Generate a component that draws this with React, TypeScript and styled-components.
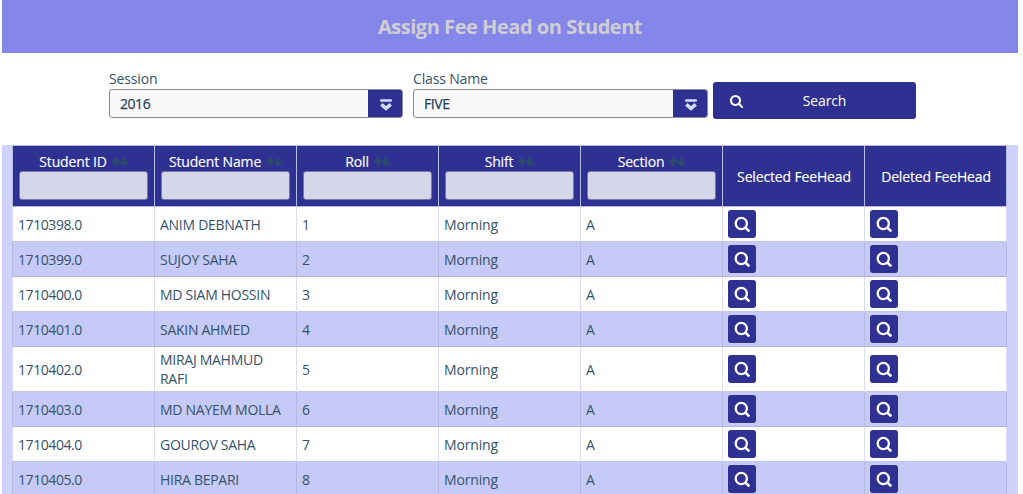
import React from 'react';
import styled, { createGlobalStyle } from 'styled-components';

const navy = '#2e3092';

const GlobalStyle = createGlobalStyle`
  * { box-sizing: border-box; }
  body {
    margin: 0;
    height: 494px;
    overflow: hidden;
    background: #fff;
    color: #34526b;
    font: 14px/19px "Open Sans", sans-serif;
  }
`;

const Page = styled.main`
  width: 1016px;
  height: 494px;
  margin-left: 2px;
  overflow: hidden;
`;

const Banner = styled.header`
  display: flex;
  align-items: center;
  justify-content: center;
  height: 53px;
  background: #8586e9;
`;

const Title = styled.h1`
  margin: 0;
  color: #cfcfd3;
  font-size: 20px;
  line-height: 27px;
  font-weight: 700;
  letter-spacing: -0.46px;
`;

const Filters = styled.section`
  display: flex;
  align-items: flex-start;
  height: 92px;
  padding: 16px 0 0 107px;
`;

const Field = styled.div<{ $width: number }>`
  width: ${(p) => p.$width}px;
  margin-right: 10px;
`;

const Label = styled.div`
  height: 20px;
  letter-spacing: -0.15px;
`;

const Select = styled.div`
  display: flex;
  height: 29px;
  border: 1px solid #8b8b95;
  border-radius: 3px;
  background: #f8f8f8;
  overflow: hidden;
`;

const SelectValue = styled.div`
  flex: 1;
  padding: 4px 10px;
  color: #25435c;
  letter-spacing: -0.45px;
  -webkit-text-stroke: 0.25px #25435c;
`;

const Trigger = styled.div`
  display: flex;
  align-items: center;
  justify-content: center;
  width: 34px;
  padding: 2px 0 0 2px;
  background: ${navy};
`;

const SearchButton = styled.button`
  display: flex;
  align-items: center;
  width: 203px;
  height: 37px;
  margin: 13px 0 0 -5px;
  padding: 0 0 0 17px;
  border: 0;
  border-radius: 3px;
  background: ${navy};
  color: #fff;
  font: inherit;
`;

const ButtonText = styled.span`
  flex: 1;
  padding-right: 10px;
  text-align: center;
  letter-spacing: -0.15px;
`;

const TablePanel = styled.section`
  padding: 0 11px 0 10px;
  background: #cfd2fd;
`;

const Row = styled.div<{ $striped?: boolean }>`
  display: grid;
  grid-template-columns: repeat(6, 142px) 143px;
  min-height: 35px;
  background: ${(p) => (p.$striped ? '#c6caf6' : '#fff')};
  --rule: ${(p) => (p.$striped ? '#b5b9e2' : '#d9ddf2')};
  --base: ${(p) => (p.$striped ? '#b0b4dd' : '#c0c4ea')};
`;

const HeadRow = styled(Row)`
  height: 62px;
  background: ${navy};
  color: #fff;
`;

const HeadCell = styled.div<{ $plain?: boolean }>`
  display: flex;
  flex-direction: column;
  align-items: ${(p) => (p.$plain ? 'center' : 'stretch')};
  justify-content: ${(p) => (p.$plain ? 'center' : 'flex-start')};
  padding: ${(p) => (p.$plain ? '0 0 0 1px' : '6px 6px 0')};
  border: solid #b7bbdf;
  border-width: 1px 0 1px 1px;
  &:last-child { border-right-width: 1px; }
`;

const HeadLabel = styled.div`
  display: flex;
  align-items: center;
  justify-content: center;
  gap: 5px;
  height: 19px;
  letter-spacing: -0.15px;
  -webkit-text-stroke: 0.15px #fff;
`;

const FilterInput = styled.input`
  width: 129px;
  height: 29px;
  border: 1px solid #77779f;
  border-radius: 3px;
  background: #d5d6e9;
`;

const Cell = styled.div<{ $tracking?: number }>`
  display: flex;
  align-items: center;
  padding: 3px 5px;
  border-left: 1px solid var(--rule);
  border-bottom: 1px solid var(--base);
  letter-spacing: ${(p) => p.$tracking ?? -0.15}px;
  &:last-child { border-right: 1px solid var(--rule); }
`;

const IconButton = styled.button`
  display: flex;
  align-items: center;
  justify-content: center;
  width: 28px;
  height: 28px;
  padding: 0;
  border: 0;
  border-radius: 3px;
  background: ${navy};
`;

const SearchIcon = () => (
  <svg width="13" height="14" viewBox="0 0 1664 1792" fill="#fff">
    <path d="M1152 832q0-185-131.5-316.5T704 384 387.5 515.5 256 832t131.5 316.5T704 1280t316.5-131.5T1152 832zm512 832q0 52-38 90t-90 38q-54 0-90-38l-343-342q-179 124-399 124-143 0-273.5-55.5t-225-150-150-225T0 832t55.5-273.5 150-225 225-150T704 128t273.5 55.5 225 150 150 225T1408 832q0 220-124 399l343 343q37 37 37 90z" />
  </svg>
);

const LensIcon = () => (
  <svg width="16" height="16" viewBox="0 0 16 16" fill="none" stroke="#fff" strokeWidth="2.3">
    <circle cx="7.3" cy="7.5" r="5.6" />
    <path d="M10.8 11 15.4 15.4" strokeWidth="2.6" />
  </svg>
);

const ChevronIcon = () => (
  <svg width="12" height="12" viewBox="0 0 12 12" fill="none" stroke="#d3dcff">
    <path d="M1.2 1.5h9.6" strokeWidth="2.4" strokeLinecap="round" />
    <path d="m1.3 5.4 4.7 4 4.7-4" strokeWidth="3.6" />
  </svg>
);

const SortIcon = () => (
  <svg width="16" height="10" viewBox="0 0 16 10" fill="none" stroke="#2b4a6c" strokeWidth="2.8">
    <path d="M4 9V2M.8 5.4 4 2.2l3.2 3.2M12 1v7M8.8 4.6 12 7.8l3.2-3.2" />
  </svg>
);

const columns = ['Student ID', 'Student Name', 'Roll', 'Shift', 'Section'];
const students = [
  ['1710398.0', 'ANIM DEBNATH'],
  ['1710399.0', 'SUJOY SAHA'],
  ['1710400.0', 'MD SIAM HOSSIN'],
  ['1710401.0', 'SAKIN AHMED'],
  ['1710402.0', 'MIRAJ MAHMUD RAFI'],
  ['1710403.0', 'MD NAYEM MOLLA'],
  ['1710404.0', 'GOUROV SAHA'],
  ['1710405.0', 'HIRA BEPARI'],
];

const Dropdown = ({ label, value, width }: { label: string; value: string; width: number }) => (
  <Field $width={width}>
    <Label>{label}</Label>
    <Select>
      <SelectValue>{value}</SelectValue>
      <Trigger><ChevronIcon /></Trigger>
    </Select>
  </Field>
);

export default function App() {
  return (
    <>
      <GlobalStyle />
      <Page>
        <Banner><Title>Assign Fee Head on Student</Title></Banner>
        <Filters>
          <Dropdown label="Session" value="2016" width={294} />
          <Dropdown label="Class Name" value="FIVE" width={295} />
          <SearchButton><SearchIcon /><ButtonText>Search</ButtonText></SearchButton>
        </Filters>
        <TablePanel>
          <HeadRow>
            {columns.map((name) => (
              <HeadCell key={name}>
                <HeadLabel>{name}<SortIcon /></HeadLabel>
                <FilterInput aria-label={name} />
              </HeadCell>
            ))}
            <HeadCell $plain><HeadLabel>Selected FeeHead</HeadLabel></HeadCell>
            <HeadCell $plain><HeadLabel>Deleted FeeHead</HeadLabel></HeadCell>
          </HeadRow>
          {students.map(([id, name], i) => (
            <Row key={id} $striped={i % 2 === 1}>
              <Cell $tracking={-0.42}>{id}</Cell>
              <Cell $tracking={-0.28}>{name}</Cell>
              <Cell>{i + 1}</Cell>
              <Cell>Morning</Cell>
              <Cell>A</Cell>
              <Cell><IconButton aria-label="Selected"><LensIcon /></IconButton></Cell>
              <Cell><IconButton aria-label="Deleted"><LensIcon /></IconButton></Cell>
            </Row>
          ))}
        </TablePanel>
      </Page>
    </>
  );
}
